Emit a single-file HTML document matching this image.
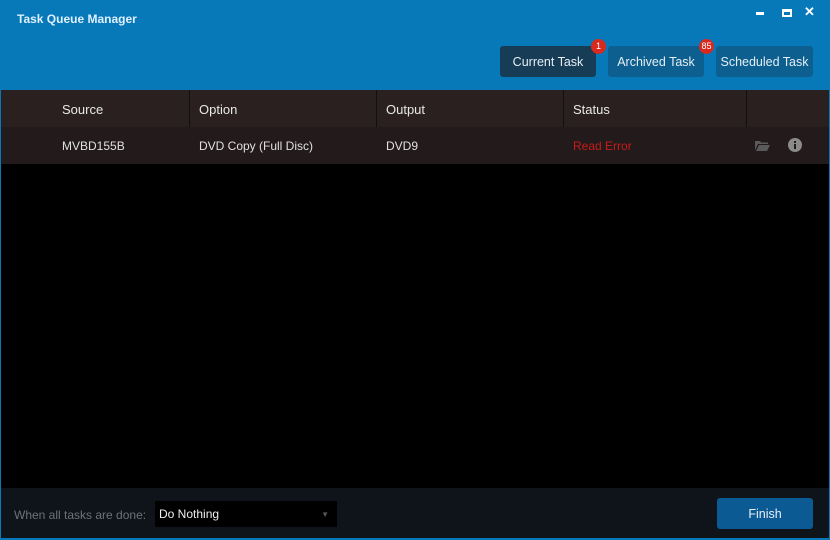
<!DOCTYPE html>
<html><head><meta charset="utf-8"><style>
*{margin:0;padding:0;box-sizing:border-box}
body{width:830px;height:540px;overflow:hidden;background:#0779b9;font-family:"Liberation Sans",Arial,sans-serif;position:relative}
.title{position:absolute;left:17px;top:12px;color:#dff0ff;font-size:12px;font-weight:bold}
.ctl{position:absolute;top:7px;color:#fff}
.tab{position:absolute;top:46px;height:31px;border-radius:3px;color:#e6eef4;font-size:12.5px;text-align:center;line-height:33px;background:#0d5f8f}
.badge{position:absolute;width:15px;height:15px;border-radius:50%;background:#d8291f;color:#fff;font-size:9px;line-height:15px;text-align:center}
.main{position:absolute;left:1px;top:90px;width:828px;height:398px;background:#000}
.hdr{position:absolute;left:0;top:0;width:828px;height:37px;background:#2b2020;color:#e8e8e8;font-size:13px}
.row{position:absolute;left:0;top:37px;width:828px;height:37px;background:#231b1b;color:#e0e0e0;font-size:12px}
.c{position:absolute;top:1px;line-height:37px}
.sep{position:absolute;top:0;width:1px;height:37px;background:#140f0f}
.bot{position:absolute;left:1px;top:488px;width:828px;height:50px;background:#0e1419}
</style></head><body>
<div class="title">Task Queue Manager</div>
<div class="ctl" style="left:756px;top:12px;width:8px;height:3px;background:#fff"></div>
<div class="ctl" style="left:782px;top:9px;width:10px;height:8px;border:2px solid #fff;border-top-width:3px"></div>
<div class="ctl" style="left:804px;top:4px;font-size:13px;font-weight:bold">✕</div>
<div class="tab" style="left:500px;width:96px;background:#173c56">Current Task</div>
<div class="badge" style="left:591px;top:39px">1</div>
<div class="tab" style="left:608px;width:96px">Archived Task</div>
<div class="badge" style="left:699px;top:39px">85</div>
<div class="tab" style="left:716px;width:97px">Scheduled Task</div>
<div class="main">
 <div class="hdr">
  <div class="c" style="left:61px">Source</div>
  <div class="sep" style="left:188px"></div>
  <div class="c" style="left:198px">Option</div>
  <div class="sep" style="left:375px"></div>
  <div class="c" style="left:385px">Output</div>
  <div class="sep" style="left:562px"></div>
  <div class="c" style="left:572px">Status</div>
  <div class="sep" style="left:745px"></div>
 </div>
 <div class="row">
  <div class="c" style="left:61px">MVBD155B</div>
  <div class="c" style="left:198px">DVD Copy (Full Disc)</div>
  <div class="c" style="left:385px">DVD9</div>
  <div class="c" style="left:572px;color:#c81a1a">Read Error</div>
  <svg style="position:absolute;left:754px;top:13px" width="15" height="11"><path d="M0 1h5l1 1.5h7v1.5H3L0 10z M1 11l3-6h11l-3 6z" fill="#5a5a5a"/></svg>
  <svg style="position:absolute;left:787px;top:11px" width="14" height="14"><circle cx="7" cy="7" r="7" fill="#8a8a8a"/><rect x="6" y="6" width="2" height="5" fill="#231b1b"/><rect x="6" y="3" width="2" height="2" fill="#231b1b"/></svg>
 </div>
</div>
<div class="bot">
 <div style="position:absolute;left:13px;top:20px;color:#6d7278;font-size:12px">When all tasks are done:</div>
 <div style="position:absolute;left:154px;top:13px;width:182px;height:26px;background:#000;color:#eee;font-size:12px;line-height:27px;padding-left:4px">Do Nothing<span style="position:absolute;right:8px;top:0;color:#555;font-size:8px">▼</span></div>
 <div style="position:absolute;left:716px;top:10px;width:96px;height:31px;background:#0c5a94;border-radius:3px;color:#e8f0f6;font-size:12.5px;line-height:33px;text-align:center">Finish</div>
</div>
</body></html>
